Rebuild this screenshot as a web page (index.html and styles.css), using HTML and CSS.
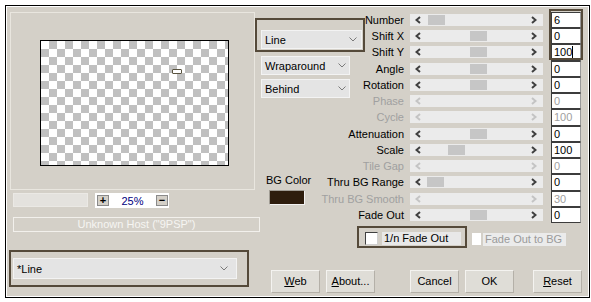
FILE: index.html
```html
<!DOCTYPE html>
<html lang="en">
<head>
    <meta charset="UTF-8">
    <title>Tile</title>
    <link rel="stylesheet" href="styles.css">
</head>
<body>
    <div class="dialog">
        <div class="left">
            <div class="preview">
                <div class="canvas">
                    <span class="marker"></span>
                </div>
            </div>
            <div class="zoom-row">
                <div class="zoom-field"></div>
                <div class="zoom-ctl">
                    <span class="zbtn">+</span>
                    <span class="zval">25%</span>
                    <span class="zbtn">&minus;</span>
                </div>
            </div>
            <div class="host">Unknown Host ("9PSP")</div>
            <div class="preset mark">
                <div class="select">
                    <span>*Line</span>
                    <svg class="chev" width="8" height="5" viewBox="0 0 8 5"><polyline points="0.5,0.5 4,4 7.5,0.5" fill="none" stroke="#7a7a7a" stroke-width="1"/></svg>
                </div>
            </div>
        </div>

        <div class="right">
            <div class="top">
                <div class="mid">
                    <div class="line-box mark">
                        <div class="select">
                            <span>Line</span>
                            <svg class="chev" width="8" height="5" viewBox="0 0 8 5"><polyline points="0.5,0.5 4,4 7.5,0.5" fill="none" stroke="#7a7a7a" stroke-width="1"/></svg>
                        </div>
                    </div>
                    <div class="select small">
                        <span>Wraparound</span>
                        <svg class="chev" width="8" height="5" viewBox="0 0 8 5"><polyline points="0.5,0.5 4,4 7.5,0.5" fill="none" stroke="#7a7a7a" stroke-width="1"/></svg>
                    </div>
                    <div class="select small">
                        <span>Behind</span>
                        <svg class="chev" width="8" height="5" viewBox="0 0 8 5"><polyline points="0.5,0.5 4,4 7.5,0.5" fill="none" stroke="#7a7a7a" stroke-width="1"/></svg>
                    </div>
                    <div class="bg-label">BG Color</div>
                    <div class="swatch"></div>
                </div>

                <div class="controls" id="controls"></div>
            </div>

            <div class="buttons">
                <div class="btn"><u>W</u>eb</div>
                <div class="btn gap-s"><u>A</u>bout...</div>
                <div class="btn gap-l">Cancel</div>
                <div class="btn gap-s">OK</div>
                <div class="btn gap-m"><u>R</u>eset</div>
            </div>
        </div>

        <span class="input-mark mark"></span>
    </div>

    <script>
        // name, value, thumb offset (null = disabled)
        var rows = [
            ["Number", "6", 18],
            ["Shift X", "0", 60],
            ["Shift Y", "100", 60],
            ["Angle", "0", 60],
            ["Rotation", "0", 60],
            ["Phase", "0", null],
            ["Cycle", "100", null],
            ["Attenuation", "0", 60],
            ["Scale", "100", 38],
            ["Tile Gap", "0", null],
            ["Thru BG Range", "0", 17],
            ["Thru BG Smooth", "30", null],
            ["Fade Out", "0", 60]
        ];

        var left = '<svg width="6" height="8" viewBox="0 0 6 8"><polyline points="5,1 1.5,4 5,7" fill="none" stroke-width="2"/></svg>';
        var right = '<svg width="6" height="8" viewBox="0 0 6 8"><polyline points="1,1 4.5,4 1,7" fill="none" stroke-width="2"/></svg>';

        var html = "";
        rows.forEach(function(r) {
            var off = r[2] === null;
            html += '<div class="row' + (off ? ' off' : '') + '">' +
                '<span class="label">' + r[0] + '</span>' +
                '<div class="slider">' + left +
                (off ? '' : '<span class="thumb" style="left:' + r[2] + 'px"></span>') +
                right + '</div>' +
                '<span class="input">' + r[1] + (r[0] == "Shift Y" ? '<i class="caret"></i>' : '') + '</span>' +
                '</div>';
        });
        html += '<div class="check-row">' +
            '<div class="check-box mark"><span class="cb"></span><span class="cb-label">1/n Fade Out</span></div>' +
            '<span class="cb dis"></span><span class="cb-label dis">Fade Out to BG</span>' +
            '</div>';
        document.getElementById("controls").innerHTML = html;
    </script>
</body>
</html>
```

FILE: styles.css
```css
body {
    margin: 0;
    padding: 5px;
    background: #fff;
    font-family: "Liberation Sans", Arial, sans-serif;
    font-size: 11px;
    color: #000;
}
.dialog {
    position: relative;
    box-sizing: border-box;
    width: 585px;
    height: 293px;
    border: 1px solid #000;
    box-shadow: inset 0 0 0 1px #fff;
    background: #d4d0c8;
    display: flex;
    padding: 6px 5px 0 4px;
}
.mark {
    box-sizing: border-box;
    border: 2px solid #554a3a;
}

/* left side */
.left {
    width: 245px;
    flex: none;
}
.preview {
    box-sizing: border-box;
    height: 178px;
    border: 1px solid #e9e6df;
    padding: 27px 0 0 29px;
}
.canvas {
    position: relative;
    box-sizing: border-box;
    width: 189px;
    height: 126px;
    border: 1px solid #000;
    background: repeating-conic-gradient(#c0c0c0 0 25%, #fff 0 50%) 0 0 / 16px 16px;
}
.marker {
    position: absolute;
    left: 131px;
    top: 28px;
    width: 8px;
    height: 3px;
    border: 1px solid #5a5440;
    border-radius: 1px;
    background: #fff;
}
.zoom-row {
    display: flex;
    margin-top: 3px;
    padding-left: 3px;
}
.zoom-field {
    box-sizing: border-box;
    width: 75px;
    height: 14px;
    background: #e4e2de;
    border: 1px solid #ebe9e5;
}
.zoom-ctl {
    box-sizing: border-box;
    margin-left: 7px;
    width: 74px;
    height: 15px;
    padding: 0 1px 0 2px;
    background: #fff;
    display: flex;
    align-items: center;
}
.zbtn {
    box-sizing: border-box;
    width: 12px;
    height: 11px;
    border: 1px solid #8a8a8a;
    background: #d4d0c8;
    display: flex;
    align-items: center;
    justify-content: center;
    font-weight: bold;
    line-height: 1;
}
.zval {
    flex: 1;
    text-align: center;
    color: #000080;
}
.host {
    box-sizing: border-box;
    margin: 9px 0 0 3px;
    width: 247px;
    height: 15px;
    border: 1px solid #f2f0ec;
    color: #f6f5f2;
    text-align: center;
    line-height: 13px;
}
.preset {
    margin: 18px 0 0 -1px;
    width: 240px;
    height: 37px;
    padding: 6px 0 0 2px;
}
.select {
    box-sizing: border-box;
    height: 19px;
    background: #e4e4e4;
    border: 1px solid #f3f3f3;
    display: flex;
    align-items: center;
    justify-content: space-between;
    padding: 0 3px 0 3px;
}
.preset .select {
    width: 224px;
    height: 21px;
    padding-right: 8px;
}

/* right side */
.right {
    flex: 1;
    display: flex;
    flex-direction: column;
}
.top {
    display: flex;
}
.mid {
    width: 65px;
    flex: none;
}
.line-box {
    margin-top: 6px;
    width: 110px;
    height: 34px;
    padding: 10px 0 0 4px;
}
.line-box .select {
    width: 101px;
    padding-right: 4px;
}
.select.small {
    margin: 4px 0 0 6px;
    width: 89px;
}
.bg-label {
    margin: 76px 0 0 11px;
    line-height: 13px;
    white-space: nowrap;
}
.swatch {
    box-sizing: border-box;
    margin: 3px 0 0 14px;
    width: 36px;
    height: 15px;
    border: 1px solid #f2f2f2;
    border-top-color: #a09c94;
    border-left-color: #a09c94;
    background: #2e1d0d;
}
.controls {
    width: 263px;
}
.row {
    display: flex;
    align-items: flex-start;
    height: 16px;
}
.row:nth-child(4n+3) {
    height: 17px;
}
.label {
    width: 84px;
    text-align: right;
    line-height: 16px;
    white-space: nowrap;
}
.slider {
    position: relative;
    box-sizing: border-box;
    margin: 2px 0 0 6px;
    width: 133px;
    height: 12px;
    padding: 0 6px 0 5px;
    background: #ebebeb;
    display: flex;
    align-items: center;
    justify-content: space-between;
}
.slider svg {
    stroke: #404040;
}
.thumb {
    position: absolute;
    top: 1px;
    width: 17px;
    height: 10px;
    background: #c6c6c6;
}
.input {
    position: relative;
    box-sizing: border-box;
    margin-left: 8px;
    width: 30px;
    height: 16px;
    padding-left: 2px;
    border: 1px solid #3c3c3c;
    border-right-color: #9a9a9a;
    background: #fff;
    line-height: 14px;
}
.row:nth-child(4n+3) .input {
    height: 17px;
}
.caret {
    display: inline-block;
    width: 1px;
    height: 12px;
    background: #000;
    vertical-align: -2px;
}
.row.off .label,
.row.off .input {
    color: #a0a0a0;
}
.row.off .slider svg {
    stroke: #c4c4c4;
}
.check-row {
    display: flex;
    align-items: flex-start;
    margin: 3px 0 0 37px;
}
.check-box {
    display: flex;
    width: 110px;
    height: 22px;
    padding: 4px 0 0 6px;
}
.cb {
    box-sizing: border-box;
    width: 13px;
    height: 13px;
    background: #fff;
    border: 1px solid #404040;
    border-right-color: #d0d0d0;
    border-bottom-color: #d0d0d0;
}
.cb-label {
    box-sizing: border-box;
    margin-left: 4px;
    width: 79px;
    height: 13px;
    padding-left: 2px;
    background: #e8e8e8;
    line-height: 13px;
    white-space: nowrap;
}
.cb.dis {
    margin: 7px 0 0 5px;
    width: 9px;
    height: 12px;
    border: none;
}
.cb-label.dis {
    margin: 7px 0 0 2px;
    width: 83px;
    color: #9a9a9a;
    background: #ebebeb;
}
.buttons {
    display: flex;
    margin-top: 22px;
    padding-left: 16px;
}
.btn {
    box-sizing: border-box;
    width: 49px;
    height: 23px;
    border: 1px solid #f4f3f0;
    border-right-color: #b4b0a8;
    border-bottom-color: #b4b0a8;
    background: #dfddd7;
    text-align: center;
    line-height: 21px;
}
.gap-s {
    margin-left: 6px;
}
.gap-l {
    margin-left: 35px;
}
.gap-m {
    margin-left: 19px;
}
.input-mark {
    position: absolute;
    left: 543px;
    top: 3px;
    width: 34px;
    height: 51px;
}
```
